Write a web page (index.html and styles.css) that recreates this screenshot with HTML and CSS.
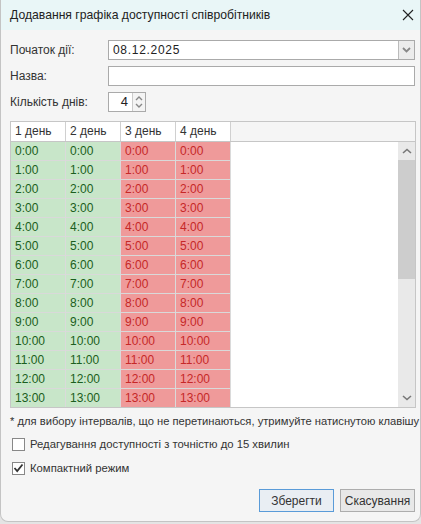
FILE: index.html
```html
<!DOCTYPE html>
<html lang="uk">
<head>
<meta charset="utf-8">
<link rel="stylesheet" href="styles.css">
</head>
<body>
<div class="dialog">
  <div class="titlebar">
    <span class="title">Додавання графіка доступності співробітників</span>
    <svg class="close" width="12" height="12" viewBox="0 0 12 12"><path d="M1 1L11 11M11 1L1 11" stroke="#222" stroke-width="1.1" fill="none"/></svg>
  </div>
  <div class="content">
    <div class="form">
      <label>Початок дії:</label>
      <div class="input date"><span class="val">08.12.2025</span><span class="dd"><svg width="9" height="6" viewBox="0 0 9 6"><path d="M1 1L4.5 4.5L8 1" stroke="#888" stroke-width="1.8" fill="none"/></svg></span></div>
      <label>Назва:</label>
      <div class="input"></div>
      <label>Кількість днів:</label>
      <div class="spin"><span class="num">4</span><span class="spinbtns"><svg width="8" height="5" viewBox="0 0 8 5"><path d="M1 4L4 1L7 4" stroke="#888" stroke-width="1.4" fill="none"/></svg><svg width="8" height="5" viewBox="0 0 8 5"><path d="M1 1L4 4L7 1" stroke="#888" stroke-width="1.4" fill="none"/></svg></span></div>
    </div>
    <div class="grid">
      <div class="ghead">
        <div class="hcell">1 день</div>
        <div class="hcell">2 день</div>
        <div class="hcell">3 день</div>
        <div class="hcell">4 день</div>
        <div class="hrest"></div>
      </div>
      <div class="gbody">
        <div class="cols">
          <div class="col green">
            <div class="cell">0:00</div><div class="cell">1:00</div><div class="cell">2:00</div><div class="cell">3:00</div><div class="cell">4:00</div><div class="cell">5:00</div><div class="cell">6:00</div><div class="cell">7:00</div><div class="cell">8:00</div><div class="cell">9:00</div><div class="cell">10:00</div><div class="cell">11:00</div><div class="cell">12:00</div><div class="cell">13:00</div>
          </div>
          <div class="col green">
            <div class="cell">0:00</div><div class="cell">1:00</div><div class="cell">2:00</div><div class="cell">3:00</div><div class="cell">4:00</div><div class="cell">5:00</div><div class="cell">6:00</div><div class="cell">7:00</div><div class="cell">8:00</div><div class="cell">9:00</div><div class="cell">10:00</div><div class="cell">11:00</div><div class="cell">12:00</div><div class="cell">13:00</div>
          </div>
          <div class="col red">
            <div class="cell">0:00</div><div class="cell">1:00</div><div class="cell">2:00</div><div class="cell">3:00</div><div class="cell">4:00</div><div class="cell">5:00</div><div class="cell">6:00</div><div class="cell">7:00</div><div class="cell">8:00</div><div class="cell">9:00</div><div class="cell">10:00</div><div class="cell">11:00</div><div class="cell">12:00</div><div class="cell">13:00</div>
          </div>
          <div class="col red">
            <div class="cell">0:00</div><div class="cell">1:00</div><div class="cell">2:00</div><div class="cell">3:00</div><div class="cell">4:00</div><div class="cell">5:00</div><div class="cell">6:00</div><div class="cell">7:00</div><div class="cell">8:00</div><div class="cell">9:00</div><div class="cell">10:00</div><div class="cell">11:00</div><div class="cell">12:00</div><div class="cell">13:00</div>
          </div>
        </div>
        <div class="scrollbar">
          <div class="sbtn"><svg width="10" height="6" viewBox="0 0 10 6"><path d="M1 5L5 1.5L9 5" stroke="#777" stroke-width="1.6" fill="none"/></svg></div>
          <div class="thumb"></div>
          <div class="track"></div>
          <div class="sbtn"><svg width="10" height="6" viewBox="0 0 10 6"><path d="M1 1L5 4.5L9 1" stroke="#777" stroke-width="1.6" fill="none"/></svg></div>
        </div>
      </div>
    </div>
    <div class="note">* для вибору інтервалів, що не перетинаються, утримуйте натиснутою клавішу</div>
    <div class="check"><span class="box"></span><span>Редагування доступності з точністю до 15 хвилин</span></div>
    <div class="check"><span class="box"><svg width="11" height="10" viewBox="0 0 11 10"><path d="M1.5 5L4.2 8L9.5 1.5" stroke="#333" stroke-width="1.8" fill="none"/></svg></span><span>Компактний режим</span></div>
    <div class="buttons">
      <button class="btn primary">Зберегти</button>
      <button class="btn">Скасування</button>
    </div>
  </div>
</div>
</body>
</html>
```

FILE: styles.css
```css
html, body {
  margin: 0;
  padding: 0;
  background: #e4e4e4;
}
body {
  font-family: "Liberation Sans", "DejaVu Sans", sans-serif;
  font-size: 12px;
  color: #333;
  width: 421px;
  height: 524px;
  overflow: hidden;
}
.dialog {
  box-sizing: border-box;
  width: 421px;
  height: 522px;
  background: #f5f5f5;
  border: 1px solid #c4c4c4;
  border-top: none;
  border-radius: 0 0 8px 8px;
  overflow: hidden;
}
.titlebar {
  height: 30px;
  background: #e9f6f7;
  display: flex;
  align-items: center;
  justify-content: space-between;
  padding: 0 6px 0 9px;
}
.title {
  font-size: 12.2px;
  color: #222;
}
.close {
  display: block;
}
.content {
  padding: 10px 5px 0 9px;
}
.form {
  display: grid;
  grid-template-columns: 98px 1fr;
  grid-template-rows: 20px 20px 20px;
  row-gap: 6px;
  align-items: center;
}
.form label {
  color: #333;
}
.input {
  box-sizing: border-box;
  height: 20px;
  border: 1px solid #aaa;
  background: #fff;
  display: flex;
  align-items: center;
}
.date .val {
  flex: 1;
  padding-left: 4px;
  color: #222;
  letter-spacing: 0.7px;
}
.dd {
  width: 15px;
  height: 18px;
  border-left: 1px solid #bbb;
  background: #ececec;
  display: flex;
  align-items: center;
  justify-content: center;
}
.spin {
  box-sizing: border-box;
  width: 38px;
  height: 20px;
  border: 1px solid #aaa;
  background: #fff;
  display: flex;
}
.num {
  flex: 1;
  text-align: right;
  padding-right: 4px;
  line-height: 18px;
  color: #222;
  font-size: 13px;
}
.spinbtns {
  width: 13px;
  border-left: 1px solid #ccc;
  background: #f4f4f4;
  display: flex;
  flex-direction: column;
  justify-content: space-around;
  align-items: center;
  padding: 2px 0;
  box-sizing: border-box;
}
.spinbtns svg {
  display: block;
}
.grid {
  margin-top: 9px;
  box-sizing: border-box;
  width: 406px;
  height: 287px;
  border: 1px solid #c6c6c6;
  background: #fff;
  display: flex;
  flex-direction: column;
}
.ghead {
  height: 19px;
  border-bottom: 1px solid #c6c6c6;
  display: flex;
  flex: none;
}
.hcell {
  box-sizing: border-box;
  width: 55px;
  border-right: 1px solid #d0d0d0;
  background: #fff;
  padding-left: 4px;
  line-height: 19px;
  color: #333;
}
.hrest {
  flex: 1;
  background: #f5f5f5;
}
.gbody {
  flex: 1;
  display: flex;
  overflow: hidden;
}
.cols {
  flex: 1;
  display: flex;
  overflow: hidden;
}
.col {
  box-sizing: border-box;
  width: 55px;
  border-right: 1px solid #dadada;
}
.cell {
  box-sizing: border-box;
  height: 19px;
  border-bottom: 1px solid #d9d9d9;
  line-height: 18px;
  padding-left: 4px;
  font-size: 12px;
}
.green .cell {
  background: #c8e6c9;
  color: #1b5e20;
}
.red .cell {
  background: #ef9a9a;
  color: #c62828;
}
.scrollbar {
  width: 17px;
  background: #e9e9e9;
  display: flex;
  flex-direction: column;
}
.sbtn {
  height: 18px;
  display: flex;
  align-items: center;
  justify-content: center;
  flex: none;
}
.thumb {
  height: 119px;
  background: #cdcdcd;
  flex: none;
}
.track {
  flex: 1;
}
.note {
  margin-top: 6px;
  white-space: nowrap;
  color: #333;
  height: 14px;
  line-height: 14px;
  font-size: 11.2px;
}
.check {
  display: flex;
  align-items: center;
  height: 16px;
  margin-top: 8px;
  color: #333;
  font-size: 11.3px;
}
.check + .check {
  margin-top: 8px;
}
.box {
  box-sizing: border-box;
  width: 13px;
  height: 13px;
  border: 1px solid #888;
  background: #fff;
  margin: 0 5px 0 2px;
  display: flex;
  align-items: center;
  justify-content: center;
}
.box svg {
  display: block;
}
.buttons {
  display: flex;
  justify-content: flex-end;
  gap: 6px;
  margin-top: 13px;
}
.btn {
  box-sizing: border-box;
  height: 23px;
  width: 75px;
  border: 1px solid #adadad;
  background: #e8e8e8;
  font-family: inherit;
  font-size: 12px;
  color: #333;
  padding: 0;
}
.btn.primary {
  border-color: #5a9bd8;
  background: #e9eef3;
}
```
